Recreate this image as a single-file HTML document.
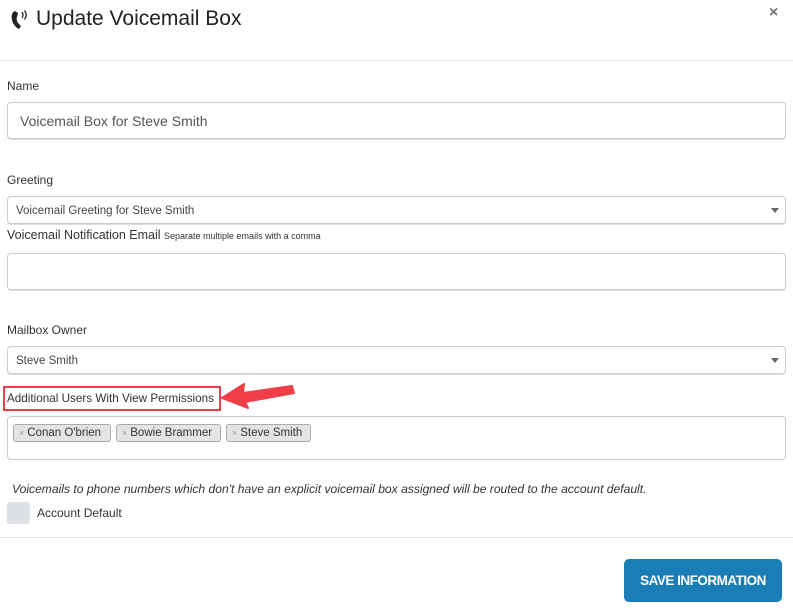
<!DOCTYPE html><html><head><style>
body{margin:0;width:793px;height:614px;background:#fff;font-family:"Liberation Sans",sans-serif;color:#333;position:relative;overflow:hidden}
.a{position:absolute}
.lbl{font-size:12px;color:#333}
.box{position:absolute;left:7px;width:779px;border:1px solid #ccc;border-radius:4px;box-sizing:border-box;box-shadow:0 1px 0 #ddd}
.sel{font-size:11.5px;color:#444;padding-left:8px;line-height:26px}
.car{position:absolute;right:6px;top:11px;border-left:4px solid transparent;border-right:4px solid transparent;border-top:5px solid #666}
.tag{position:absolute;top:424px;height:18px;border:1px solid #aaa;border-radius:3px;background:#e4e4e4;font-size:11.5px;line-height:17px;padding:0 5px;box-sizing:border-box;color:#333}
.tag span{color:#999;font-size:9px;margin-right:3px}
</style></head><body>
<svg class="a" style="left:10px;top:9px" width="24" height="22" viewBox="0 0 24 22">
<path d="M5 2 C2 3 1 7 2 11 C3 15 6 19 9 20 L11 17 L8 14 C7 12 6 9 7 8 L8 4 Z" fill="#222"/>
<path d="M12 3 Q14 6 12 9" stroke="#222" stroke-width="1.3" fill="none"/>
<path d="M14.5 1.5 Q18 6 14.5 10.5" stroke="#222" stroke-width="1.3" fill="none"/>
</svg>
<div class="a" style="left:36px;top:7px;font-size:21px;color:#222">Update Voicemail Box</div>
<div class="a" style="left:769px;top:4px;font-size:16px;color:#777;font-weight:bold">×</div>
<div class="a" style="left:0;top:60px;width:793px;height:1px;background:#e5e5e5"></div>
<div class="a lbl" style="left:7px;top:79px">Name</div>
<div class="box" style="top:102px;height:37px;font-size:14px;padding-left:12px;line-height:37px;color:#555">Voicemail Box for Steve Smith</div>
<div class="a lbl" style="left:7px;top:173px">Greeting</div>
<div class="box sel" style="top:196px;height:28px;line-height:29px">Voicemail Greeting for Steve Smith<div class="car"></div></div>
<div class="a" style="left:7px;top:228px;font-size:12.5px;color:#333">Voicemail Notification Email <span style="font-size:9px">Separate multiple emails with a comma</span></div>
<div class="box" style="top:253px;height:37px"></div>
<div class="a lbl" style="left:7px;top:323px">Mailbox Owner</div>
<div class="box sel" style="top:346px;height:28px;line-height:29px">Steve Smith<div class="car"></div></div>
<div class="a lbl" style="left:7px;top:392px;font-size:11.7px">Additional Users With View Permissions</div>
<div class="a" style="left:3px;top:386px;width:214px;height:21px;border:2px solid #e8404a"></div>
<svg class="a" style="left:218px;top:378px" width="82" height="32"><path d="M4 20 L26 6 L25 15 L74 8 L76 15 L27 24 L30 30 Z" fill="#ef3e48" stroke="#ef3e48" stroke-width="2" stroke-linejoin="round"/></svg>
<div class="box" style="top:416px;height:44px;box-shadow:none"></div>
<div class="tag" style="left:13px;width:98px"><span>×</span>Conan O'brien</div>
<div class="tag" style="left:116px;width:105px"><span>×</span>Bowie Brammer</div>
<div class="tag" style="left:226px;width:85px"><span>×</span>Steve Smith</div>
<div class="a" style="left:12px;top:482px;font-size:12.1px;font-style:italic;color:#333">Voicemails to phone numbers which don't have an explicit voicemail box assigned will be routed to the account default.</div>
<div class="a" style="left:7px;top:502px;width:23px;height:22px;background:#dde0e5;border-radius:3px"></div>
<div class="a lbl" style="left:37px;top:506px">Account Default</div>
<div class="a" style="left:0;top:537px;width:793px;height:1px;background:#e5e5e5"></div>
<div class="a" style="left:624px;top:559px;width:158px;height:43px;background:#1a7db6;border-radius:5px;color:#fff;font-size:13.5px;text-align:center;line-height:43px;letter-spacing:-0.5px;font-weight:bold">SAVE INFORMATION</div>
</body></html>
